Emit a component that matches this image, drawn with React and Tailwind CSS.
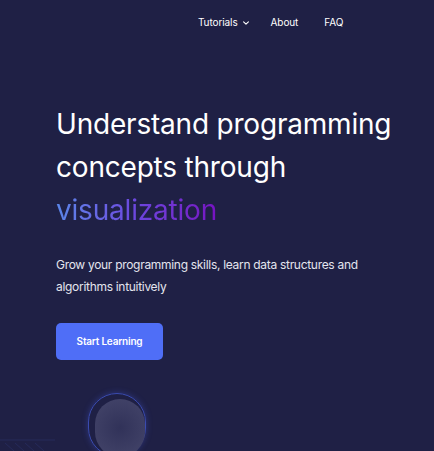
import React from "react";

export default function App() {
  return (
    <div className="relative w-[434px] h-[451px] overflow-hidden bg-[#1f2045]" style={{ fontFamily: "Inter, 'Noto Sans', sans-serif" }}>
      <nav className="flex items-center h-[45px] pl-[198px] text-[10px] text-white tracking-[-0.1px]">
        <div className="flex items-center gap-[4px]">
          <span>Tutorials</span>
          <svg width="8" height="8" viewBox="0 0 10 10" fill="none" stroke="white" strokeWidth="1.4" strokeLinecap="round" strokeLinejoin="round">
            <path d="M2 3.5 L5 6.5 L8 3.5" />
          </svg>
        </div>
        <span className="ml-[21px]">About</span>
        <span className="ml-[26px]">FAQ</span>
      </nav>
      <main className="pl-[56px] pt-[58px]">
        <h1 className="text-[28px] leading-[43px] font-normal text-white tracking-[-0.2px]">
          Understand programming
          <br />
          concepts through
          <br />
          <span className="bg-gradient-to-r from-[#5a86ea] via-[#6c45de] to-[#7610c2] bg-clip-text text-transparent">visualization</span>
        </h1>
        <p className="mt-[22px] text-[12px] leading-[22px] text-[#e4e5ee] tracking-[-0.3px]">
          Grow your programming skills, learn data structures and
          <br />
          algorithms intuitively
        </p>
        <button className="mt-[25px] w-[107px] h-[37px] rounded-[5px] bg-[#4f6ef7] text-white text-[10px] font-semibold tracking-[-0.2px]">
          Start Learning
        </button>
      </main>
      <div className="absolute left-[88px] top-[393px] w-[58px] h-[64px] rounded-full border border-[#3a4bb0] shadow-[0_0_6px_rgba(70,90,220,0.4)]"></div>
      <div className="absolute left-[95px] top-[399px] w-[50px] h-[58px] rounded-full bg-[radial-gradient(circle_at_50%_50%,#313259,#45466b)]"></div>
      <svg className="absolute left-0 bottom-0" width="80" height="14" viewBox="0 0 80 14">
        <g stroke="#262a5a" strokeWidth="1">
          <path d="M0 3 L55 3" />
          <path d="M5 6 L14 14" />
          <path d="M15 6 L24 14" />
          <path d="M25 6 L34 14" />
          <path d="M35 6 L44 14" />
        </g>
      </svg>
    </div>
  );
}
